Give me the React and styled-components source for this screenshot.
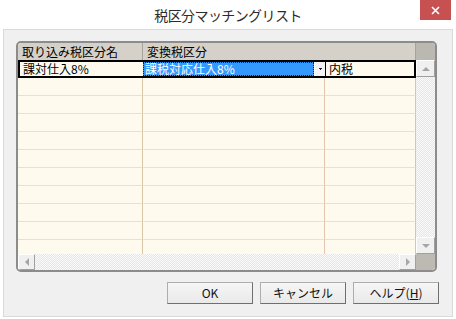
import React from 'react';
import styled, { createGlobalStyle } from 'styled-components';

const Global = createGlobalStyle`
  html, body { margin: 0; padding: 0; background: #fff; }
  body { font-family: "Noto Sans CJK JP", "Noto Sans", sans-serif; }
  * { box-sizing: border-box; }
`;

const Window = styled.div`
  width: 456px;
  height: 319px;
  display: flex;
  flex-direction: column;
  background: #fff;
  overflow: hidden;
`;

const TitleBar = styled.div`
  height: 29px;
  flex: none;
  display: grid;
  grid-template-columns: 1fr auto 1fr;
  align-items: start;
`;

const Title = styled.div`
  grid-column: 2;
  font-size: 14px;
  line-height: 30px;
  color: #2b2b2b;
  letter-spacing: -0.6px;
`;

const Close = styled.div`
  grid-column: 3;
  justify-self: end;
  margin-right: 5px;
  width: 31px;
  height: 20px;
  background: #c75050;
  display: flex;
  align-items: center;
  justify-content: center;
`;

const Client = styled.div`
  flex: 1;
  margin: 0 3px 2px 3px;
  border: 1px solid #d9d9d9;
  background: #f0f0f0;
  padding: 11px 13px 0 12px;
  display: flex;
  flex-direction: column;
`;

const Frame = styled.div`
  width: 421px;
  height: 231px;
  border: 2px solid #8c8c8c;
  border-radius: 5px;
  overflow: hidden;
  display: grid;
  grid-template-columns: 125px 182px 91px 19px;
  grid-template-rows: 17px 194px 16px;
  background: #fffaee;
  font-size: 12px;
  color: #000;
`;

const HeadCell = styled.div`
  grid-column: span ${p => p.$span || 1};
  background: #d5d1c9;
  border-right: 1px solid #a8a49c;
  padding-left: 4px;
  line-height: 17px;
  white-space: nowrap;
  overflow: hidden;
`;

const HeadCorner = styled.div`
  background: #bbb8b2;
`;

const Body = styled.div`
  grid-column: 1 / span 3;
  overflow: hidden;
  display: flex;
  flex-direction: column;
`;

const Row = styled.div`
  flex: none;
  height: 18px;
  display: grid;
  grid-template-columns: 125px 182px 91px;
`;

const Cell = styled.div`
  border-right: 1px solid ${p => (p.$warm ? '#e2c4b0' : '#d9c6a8')};
  border-bottom: 1px solid #ece0c6;
`;

const ActiveCell = styled.div`
  border-top: 2px solid #000;
  border-bottom: 2px solid #000;
  border-left: ${p => (p.$first ? '2px solid #000' : '1px solid #000')};
  border-right: ${p => (p.$last ? '2px solid #000' : 'none')};
  padding-left: 3px;
  line-height: 14px;
  white-space: nowrap;
  overflow: hidden;
`;

const EditCell = styled.div`
  border-top: 2px solid #000;
  border-bottom: 2px solid #000;
  display: flex;
  align-items: stretch;
`;

const Selected = styled.div`
  flex: 1;
  background: #3399ff;
  color: #fff;
  border: 1px dotted #1a1a1a;
  padding-left: 1px;
  line-height: 12px;
  white-space: nowrap;
`;

const DropBtn = styled.div`
  width: 11px;
  background: #f4f4f4;
  border-left: 1px solid #fff;
  display: flex;
  align-items: center;
  justify-content: center;
`;

const VScroll = styled.div`
  display: flex;
  flex-direction: column;
  background: repeating-conic-gradient(#e6e6e6 0 25%, #fafafa 0 50%) 0 0 / 2px 2px;
`;

const HScroll = styled.div`
  grid-column: 1 / span 3;
  display: flex;
  background: repeating-conic-gradient(#e6e6e6 0 25%, #fafafa 0 50%) 0 0 / 2px 2px;
`;

const Track = styled.div`
  flex: 1;
`;

const ArrowBtn = styled.div`
  flex: none;
  width: ${p => (p.$h ? '17px' : '19px')};
  height: ${p => (p.$h ? '16px' : '17px')};
  background: #f0f0f0;
  border-top: 1px solid #fff;
  border-left: 1px solid #fff;
  border-right: 1px solid #a0a0a0;
  border-bottom: 1px solid #a0a0a0;
  display: flex;
  align-items: center;
  justify-content: center;
`;

const Corner = styled.div`
  background: #bdbab3;
`;

const ButtonRow = styled.div`
  margin-top: 10px;
  display: flex;
  justify-content: flex-end;
  gap: 7px;
`;

const Button = styled.button`
  width: 86px;
  height: 22px;
  margin: 0;
  padding: 0;
  border: 1px solid #adadad;
  border-right-color: #6f6f6f;
  border-bottom-color: #6f6f6f;
  background: linear-gradient(#f6f6f6, #e9e9e9);
  font-family: "Noto Sans CJK JP", "Noto Sans", sans-serif;
  font-size: 12px;
  color: #111;
  line-height: 20px;
`;

const Key = styled.span`
  text-decoration: underline;
`;

const Tri = ({ dir }) => {
  const pts = {
    up: '0,4 4,0 8,4',
    down: '0,0 8,0 4,4',
    left: '4,0 4,8 0,4',
    right: '0,0 0,8 4,4',
  }[dir];
  const vert = dir === 'up' || dir === 'down';
  return (
    <svg width={vert ? 8 : 4} height={vert ? 4 : 8} viewBox={vert ? '0 0 8 4' : '0 0 4 8'}>
      <polygon points={pts} fill="#a6a6a6" />
    </svg>
  );
};

const emptyRows = Array.from({ length: 10 });

export default function App() {
  return (
    <>
      <Global />
      <Window>
        <TitleBar>
          <Title>税区分マッチングリスト</Title>
          <Close>
            <svg width="9" height="9" viewBox="0 0 9 9">
              <path d="M1 1 L8 8 M8 1 L1 8" stroke="#fff" strokeWidth="1.6" />
            </svg>
          </Close>
        </TitleBar>
        <Client>
          <Frame>
            <HeadCell>取り込み税区分名</HeadCell>
            <HeadCell $span={2}>変換税区分</HeadCell>
            <HeadCorner />
            <Body>
              <Row>
                <ActiveCell $first>課対仕入8%</ActiveCell>
                <EditCell>
                  <Selected>課税対応仕入8%</Selected>
                  <DropBtn>
                    <svg width="3" height="2" viewBox="0 0 3 2">
                      <rect x="0" y="0" width="3" height="1" fill="#222" />
                      <rect x="1" y="1" width="1" height="1" fill="#222" />
                    </svg>
                  </DropBtn>
                </EditCell>
                <ActiveCell $last>内税</ActiveCell>
              </Row>
              {emptyRows.map((_, i) => (
                <Row key={i}>
                  <Cell />
                  <Cell $warm />
                  <Cell />
                </Row>
              ))}
            </Body>
            <VScroll>
              <ArrowBtn><Tri dir="up" /></ArrowBtn>
              <Track />
              <ArrowBtn><Tri dir="down" /></ArrowBtn>
            </VScroll>
            <HScroll>
              <ArrowBtn $h><Tri dir="left" /></ArrowBtn>
              <Track />
              <ArrowBtn $h><Tri dir="right" /></ArrowBtn>
            </HScroll>
            <Corner />
          </Frame>
          <ButtonRow>
            <Button>OK</Button>
            <Button>キャンセル</Button>
            <Button>ヘルプ(<Key>H</Key>)</Button>
          </ButtonRow>
        </Client>
      </Window>
    </>
  );
}
